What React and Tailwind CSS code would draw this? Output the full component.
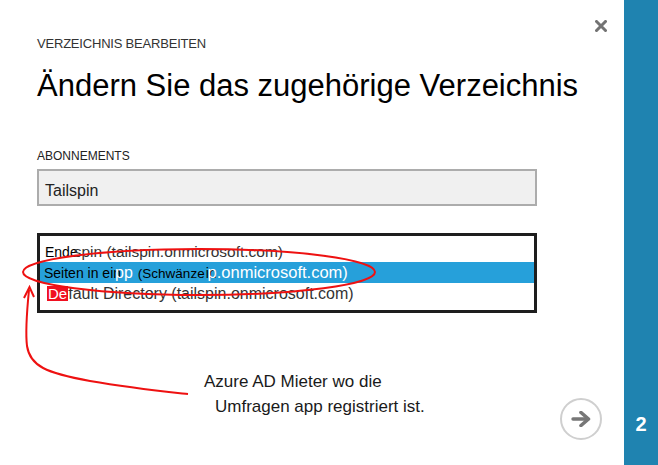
import { useState } from 'react';

const rows = [
  { id: 'ende' },
  { id: 'tailspin' },
  { id: 'default' },
];

function CloseIcon() {
  return (
    <svg width="12" height="12" viewBox="0 0 12 12" aria-hidden="true">
      <path d="M1.5 1.5 L10.5 10.5 M10.5 1.5 L1.5 10.5" stroke="#737373" strokeWidth="3" strokeLinecap="square" />
    </svg>
  );
}

function NextButton() {
  return (
    <button
      type="button"
      className="flex h-[42px] w-[42px] items-center justify-center rounded-full border-2 border-[#cfcfcf] bg-white"
    >
      <svg width="20" height="16" viewBox="0 0 20 16" aria-hidden="true">
        <path d="M2 8 H16" fill="none" stroke="#777" strokeWidth="3.4" strokeLinecap="round" />
        <path d="M10 1.5 L17.5 8 L10 14.5" fill="none" stroke="#777" strokeWidth="3.6" strokeLinecap="round" strokeLinejoin="round" />
      </svg>
    </button>
  );
}

function DirectoryRow({ id, selected }) {
  if (id === 'ende') {
    return (
      <div className="flex h-[21px] items-baseline whitespace-nowrap pl-[5px] leading-[21px]">
        <span className="text-[14px] text-black">Ende</span>
        <span className="-ml-[4px] text-[15.5px] text-[#333]">spin (tailspin.onmicrosoft.com)</span>
      </div>
    );
  }
  if (id === 'tailspin') {
    return (
      <div
        className={`flex h-[21px] items-baseline whitespace-nowrap pl-[4px] leading-[21px] ${selected ? 'bg-[#26a0da]' : ''}`}
      >
        <span className="text-[14px] text-black">Seiten in ein</span>
        <span className="-ml-[6px] text-[16px] text-white">pp</span>
        <span className="ml-[5px] text-[13.5px] text-black">(Schwänze</span>
        <span className="ml-[1px] text-[14px] text-black">in</span>
        <span className="-ml-[9px] text-[16.5px] text-white">p.onmicrosoft.com)</span>
      </div>
    );
  }
  return (
    <div className="flex h-[21px] items-baseline whitespace-nowrap pl-[7px] leading-[21px]">
      <span className="bg-[#f01020] px-[1px] text-[15px] leading-[15px] text-white">De</span>
      <span className="text-[16px] text-[#333]">fault Directory (tailspin.onmicrosoft.com)</span>
    </div>
  );
}

function Annotation() {
  return (
    <>
      <svg className="pointer-events-none absolute inset-0" width="624" height="465" aria-hidden="true">
        <ellipse cx="199" cy="272" rx="176" ry="23" fill="none" stroke="#ee1111" strokeWidth="2" />
        <path
          d="M29 290 C27 310 25 330 27 346 C30 366 46 373 90 381 C130 388 160 391 188 394"
          fill="none"
          stroke="#ee1111"
          strokeWidth="2"
        />
        <path d="M24 298 L29.5 287 L34 297" fill="none" stroke="#ee1111" strokeWidth="2" />
      </svg>
      <div className="absolute left-[204px] top-[369px] text-[17px] leading-[25px] text-[#1a1a1a]">
        <div>Azure AD Mieter wo die</div>
        <div className="pl-[11px]">Umfragen app registriert ist.</div>
      </div>
    </>
  );
}

export default function App() {
  const [selected] = useState('tailspin');

  return (
    <div className="flex h-[465px] w-[658px] overflow-hidden bg-white font-['Liberation_Sans',Arial,sans-serif]">
      <main className="relative flex flex-1 flex-col pl-[37px] pt-[36px]">
        <div className="absolute right-[17px] top-[20px]">
          <CloseIcon />
        </div>

        <div className="text-[13px] leading-[16px] tracking-[-0.2px] text-[#333]">VERZEICHNIS BEARBEITEN</div>
        <h1 className="mt-[16px] text-[31px] leading-[36px] font-normal text-black">
          Ändern Sie das zugehörige Verzeichnis
        </h1>

        <div className="mt-[45px] text-[12px] leading-[14px] text-[#222]">ABONNEMENTS</div>
        <div className="mt-[6px] h-[37px] w-[500px] border-2 border-[#acacac] bg-[#f0f0f0] pl-[6px] pt-[12px] text-[16px] leading-none text-[#222]">
          Tailspin
        </div>

        <div className="mt-[27px] h-[80px] w-[500px] border-[3px] border-[#1e1e1e] bg-white pt-[5px]">
          {rows.map((row) => (
            <DirectoryRow key={row.id} id={row.id} selected={selected === row.id} />
          ))}
        </div>

        <div className="mt-auto flex justify-end pb-[25px] pr-[22px]">
          <NextButton />
        </div>

        <Annotation />
      </main>

      <aside className="flex w-[34px] flex-col items-center justify-end bg-[#1f83b0] pb-[31px]">
        <span className="text-[20px] font-bold leading-[20px] text-white">2</span>
      </aside>
    </div>
  );
}
